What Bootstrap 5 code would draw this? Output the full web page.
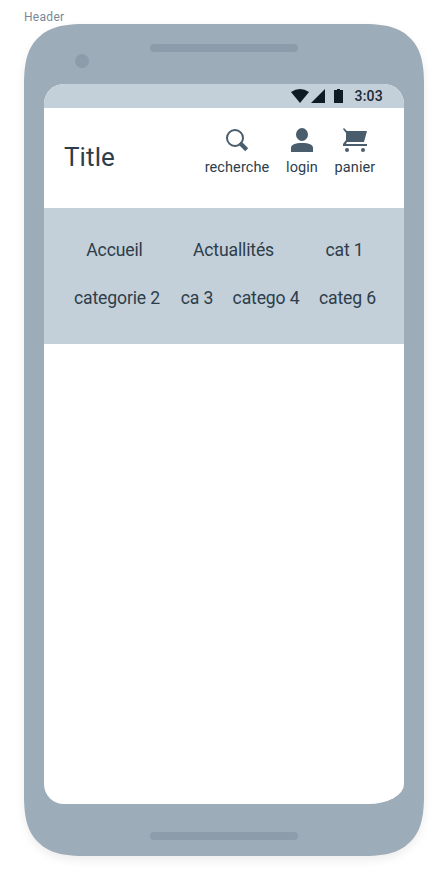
<!DOCTYPE html>
<html lang="fr">
<head>
<meta charset="utf-8">
<meta name="viewport" content="width=device-width, initial-scale=1">
<title>Header</title>
<link href="https://cdn.jsdelivr.net/npm/bootstrap@5.3.0/dist/css/bootstrap.min.css" rel="stylesheet">
<style>
body{width:448px;height:880px;overflow:hidden;font-family:Roboto,"Liberation Sans",sans-serif;color:#2d3d4a;background:#fff}
.frame-name{height:24px;padding:9px 0 0 24px;font-size:12px;line-height:16px;letter-spacing:.3px;color:#778899}
.phone{width:400px;height:832px;margin-left:24px}
.shell{left:0;top:0;overflow:visible;filter:drop-shadow(0 4px 4px rgba(0,0,0,.07))}
.screen{width:360px;height:720px;margin:60px 20px 0;border-radius:20px 20px 36px 20px / 20px;background:#fff}
.status{height:24px;padding-right:21px;background:#c3cfd9;color:#1c2933;font-size:14px;font-weight:500;line-height:24px;letter-spacing:.25px}
.topbar{height:100px;padding:0 28px 0 20px}
.page-title{font-size:26px;line-height:32px;font-weight:400;letter-spacing:.1px;padding-bottom:2px}
.tool{font-size:14.5px;line-height:18px;color:#2d3d4a;letter-spacing:.1px}
.tool svg{fill:#4a5d6c}
.tool span{margin-top:7px}
.w-a{width:66px}.w-b{width:32px}.w-c{width:42px}
.cats{height:136px;padding:18px 17px 0 20px;background:#c3cfd9}
.cats a{height:48px;line-height:48px;font-size:17.6px;letter-spacing:-.15px;color:#2d3d4a;flex:none}
.c101{width:101px}.c137{width:137px}.c85{width:85px}.c106{width:106px}.c54{width:54px}.c84{width:84px}.c79{width:79px}
</style>
</head>
<body>
<div class="frame-name">Header</div>
<main class="phone position-relative">
  <svg class="shell position-absolute" width="400" height="832" viewBox="0 0 400 832" aria-hidden="true">
    <path fill="#9dacb9" d="M0 60C0 31 7 21 14 14S31 0 60 0H340C369 0 379 7 386 14S400 31 400 60V772C400 801 393 811 386 818S369 832 340 832H60C31 832 21 825 14 818S0 801 0 772Z"/>
    <circle cx="58" cy="37" r="7" fill="#8d9cab"/>
    <rect x="126" y="20" width="148" height="8" rx="4" fill="#8d9cab"/>
    <rect x="126" y="808" width="148" height="8" rx="4" fill="#8d9cab"/>
  </svg>
  <div class="d-flex position-relative">
  <div class="screen overflow-hidden">
    <div class="status d-flex justify-content-end align-items-center">
      <svg width="63" height="24" viewBox="0 0 63 24" fill="#101a22" aria-hidden="true">
        <path d="M0 8Q9 2 18 8L9 19Z"/><path d="M34 5V19H20Z"/><path d="M43 6H46V5H49V6H52V19H43Z"/>
      </svg>
      <span>3:03</span>
    </div>
    <header class="topbar d-flex justify-content-between">
      <h1 class="page-title mb-0 align-self-center">Title</h1>
      <nav class="d-flex gap-3 pt-3 mt-1 text-nowrap">
        <a class="tool w-a d-flex flex-column align-items-center text-decoration-none" href="#">
          <svg width="24" height="24" viewBox="0 0 24 24"><circle cx="10" cy="10" r="8" fill="none" stroke="#4a5d6c" stroke-width="2"/><path d="M13.5 16L16 13.5L18 15L23.2 20.2L20.2 23.2L15 18Z"/></svg>
          <span>recherche</span></a>
        <a class="tool w-b d-flex flex-column align-items-center text-decoration-none" href="#">
          <svg width="24" height="24" viewBox="0 0 24 24"><ellipse cx="12" cy="6.5" rx="6" ry="6.5"/><path d="M1 24V20C1 16.5 5 15 12 15S23 16.5 23 20V24Z"/></svg>
          <span>login</span></a>
        <a class="tool w-c d-flex flex-column align-items-center text-decoration-none" href="#">
          <svg width="24" height="24" viewBox="0 0 24 24"><path d="M1 0L4 3H24L21 14H4L3 16H24V18H0V16L3 12V5L0 1Z"/><circle cx="4" cy="22" r="2"/><circle cx="20" cy="22" r="2"/></svg>
          <span>panier</span></a>
      </nav>
    </header>
    <nav class="cats text-nowrap">
      <div class="d-flex">
        <a class="c101 d-flex justify-content-center text-decoration-none" href="#">Accueil</a>
        <a class="c137 d-flex justify-content-center text-decoration-none" href="#">Actuallités</a>
        <a class="c85 d-flex justify-content-center text-decoration-none" href="#">cat 1</a>
      </div>
      <div class="d-flex">
        <a class="c106 d-flex justify-content-center text-decoration-none" href="#">categorie 2</a>
        <a class="c54 d-flex justify-content-center text-decoration-none" href="#">ca 3</a>
        <a class="c84 d-flex justify-content-center text-decoration-none" href="#">catego 4</a>
        <a class="c79 d-flex justify-content-center text-decoration-none" href="#">categ 6</a>
      </div>
    </nav>
  </div>
  </div>
</main>
<script src="https://cdn.jsdelivr.net/npm/bootstrap@5.3.0/dist/js/bootstrap.bundle.min.js"></script>
</body>
</html>
